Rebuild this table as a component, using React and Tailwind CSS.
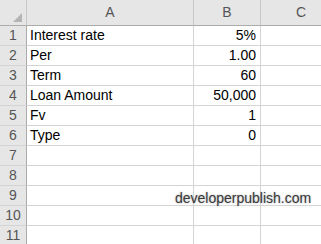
import React from "react";

const rows = [
  ["Interest rate", "5%"],
  ["Per", "1.00"],
  ["Term", "60"],
  ["Loan Amount", "50,000"],
  ["Fv", "1"],
  ["Type", "0"],
  ["", ""],
  ["", ""],
  ["", ""],
  ["", ""],
  ["", ""],
];

const App = () => {
  return (
    <div
      className="relative w-[321px] h-[244px] overflow-hidden bg-white text-[14px] text-black"
      style={{ fontFamily: '"Liberation Sans", Arial, sans-serif' }}
    >
      <div className="grid grid-cols-[27px_167px_67px_80px]">
        {/* header row */}
        <div className="relative h-[26px] bg-[#e6e6e6] border-r border-b border-r-[#c6c6c6] border-b-[#ababab]">
          <svg className="absolute left-[13px] top-[13px]" width="9" height="9" viewBox="0 0 9 9">
            <polygon points="9,0 9,9 0,9" fill="#b4b4b4" />
          </svg>
        </div>
        <div className="h-[26px] bg-[#e6e6e6] border-r border-b border-r-[#c6c6c6] border-b-[#ababab] flex items-center justify-center text-[#555]">
          A
        </div>
        <div className="h-[26px] bg-[#e6e6e6] border-r border-b border-r-[#c6c6c6] border-b-[#ababab] flex items-center justify-center text-[#555]">
          B
        </div>
        <div className="h-[26px] bg-[#e6e6e6] border-b border-b-[#ababab] flex items-center justify-center text-[#555]">
          C
        </div>

        {rows.map(([label, value], idx) => (
          <React.Fragment key={idx}>
            <div className="h-[20px] bg-[#e6e6e6] border-r border-b border-r-[#ababab] border-b-[#d4d4d4] flex items-center justify-center text-[#555]">
              {idx + 1}
            </div>
            <div className="h-[20px] border-r border-b border-[#d4d4d4] flex items-center pl-[3px]">
              {label}
            </div>
            <div className="h-[20px] border-r border-b border-[#d4d4d4] flex items-center justify-end pr-[4px]">
              {value}
            </div>
            <div className="h-[20px] border-b border-[#d4d4d4]" />
          </React.Fragment>
        ))}
      </div>

      <div
        className="absolute left-[175px] top-[188px] text-[14px] text-[#3a3a3a]"
        style={{ textShadow: "0 0 2px rgba(0,0,0,0.35)" }}
      >
        developerpublish.com
      </div>
    </div>
  );
};

export default App;
